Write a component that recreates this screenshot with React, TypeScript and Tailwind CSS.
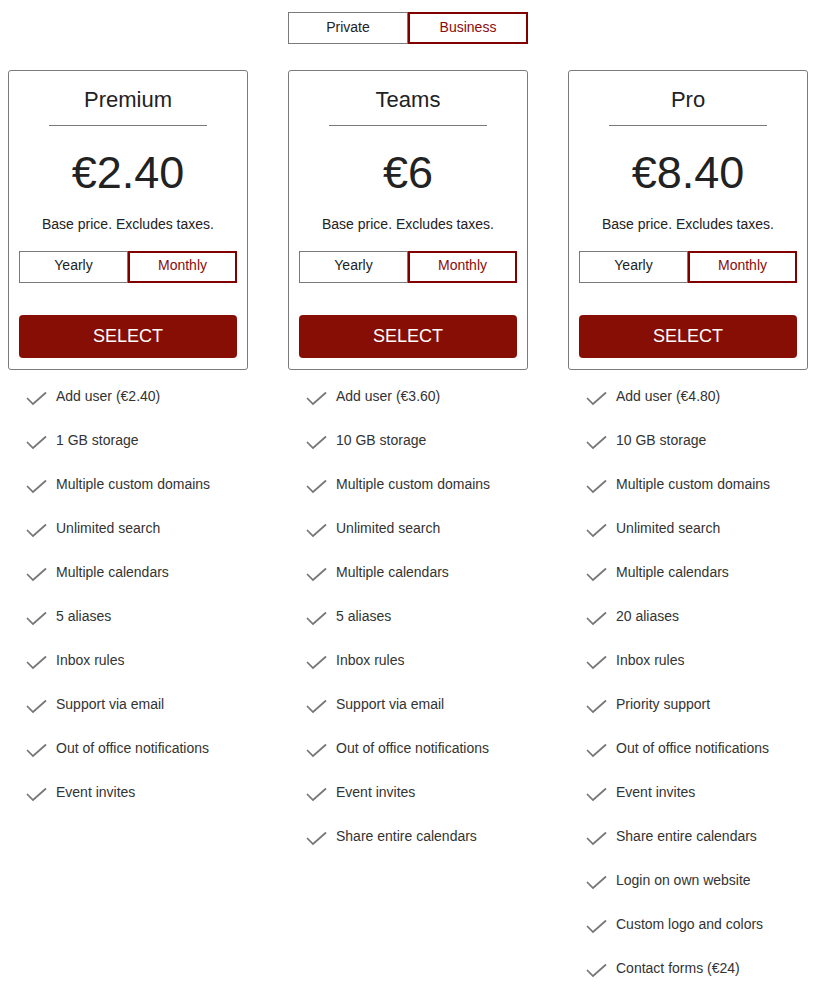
const plans = [
  {
    name: "Premium",
    price: "€2.40",
    features: [
      "Add user (€2.40)",
      "1 GB storage",
      "Multiple custom domains",
      "Unlimited search",
      "Multiple calendars",
      "5 aliases",
      "Inbox rules",
      "Support via email",
      "Out of office notifications",
      "Event invites",
    ],
  },
  {
    name: "Teams",
    price: "€6",
    features: [
      "Add user (€3.60)",
      "10 GB storage",
      "Multiple custom domains",
      "Unlimited search",
      "Multiple calendars",
      "5 aliases",
      "Inbox rules",
      "Support via email",
      "Out of office notifications",
      "Event invites",
      "Share entire calendars",
    ],
  },
  {
    name: "Pro",
    price: "€8.40",
    features: [
      "Add user (€4.80)",
      "10 GB storage",
      "Multiple custom domains",
      "Unlimited search",
      "Multiple calendars",
      "20 aliases",
      "Inbox rules",
      "Priority support",
      "Out of office notifications",
      "Event invites",
      "Share entire calendars",
      "Login on own website",
      "Custom logo and colors",
      "Contact forms (€24)",
    ],
  },
];

function Check() {
  return (
    <svg width="24" height="24" viewBox="0 0 24 24" className="shrink-0" fill="none">
      <polyline points="3,14 9,20 22,8.5" stroke="#767676" strokeWidth="1.7" />
    </svg>
  );
}

function Toggle({ left, right, small }: { left: string; right: string; small?: boolean }) {
  const pad = small ? "pb-[4px]" : "pb-[2px]";
  return (
    <div className="flex h-[32px] text-[14px]">
      <div className={`flex w-1/2 items-center justify-center border border-[#7a7a7a] text-[#222] ${pad}`}>{left}</div>
      <div className={`flex w-1/2 items-center justify-center border-2 border-[#800000] text-[#8b0b0b] ${pad}`}>{right}</div>
    </div>
  );
}

export default function App() {
  return (
    <div className="min-h-screen bg-white pt-[12px] font-['Liberation_Sans',Arial,sans-serif] text-[#222]">
      <div className="ml-2 w-[800px]">
        <div className="mx-auto w-[240px]">
          <Toggle left="Private" right="Business" />
        </div>

        <div className="mt-[26px] flex gap-10">
          {plans.map((plan) => (
            <div key={plan.name} className="w-[240px]">
              <div className="flex flex-col rounded-[3px] border border-[#7a7a7a] px-[10px] pb-[11px] pt-[16px]">
                <div className="text-center text-[22px] leading-[26px]">{plan.name}</div>
                <div className="mx-auto mt-[12px] h-px w-[158px] bg-[#7a7a7a]" />
                <div className="mt-[21px] text-center text-[45px] leading-[52px]">{plan.price}</div>
                <div className="mt-[17px] text-center text-[14px] leading-[16px]">Base price. Excludes taxes.</div>
                <div className="mt-[19px]">
                  <Toggle left="Yearly" right="Monthly" small />
                </div>
                <button className="mt-[32px] h-[43px] rounded-[4px] bg-[#860e05] text-[18px] text-white">SELECT</button>
              </div>

              <ul className="mt-[4px]">
                {plan.features.map((f) => (
                  <li key={f} className="flex h-[44px] items-center gap-2 pl-[16px] text-[14px] text-[#333]">
                    <Check />
                    <span>{f}</span>
                  </li>
                ))}
              </ul>
            </div>
          ))}
        </div>
      </div>
    </div>
  );
}
